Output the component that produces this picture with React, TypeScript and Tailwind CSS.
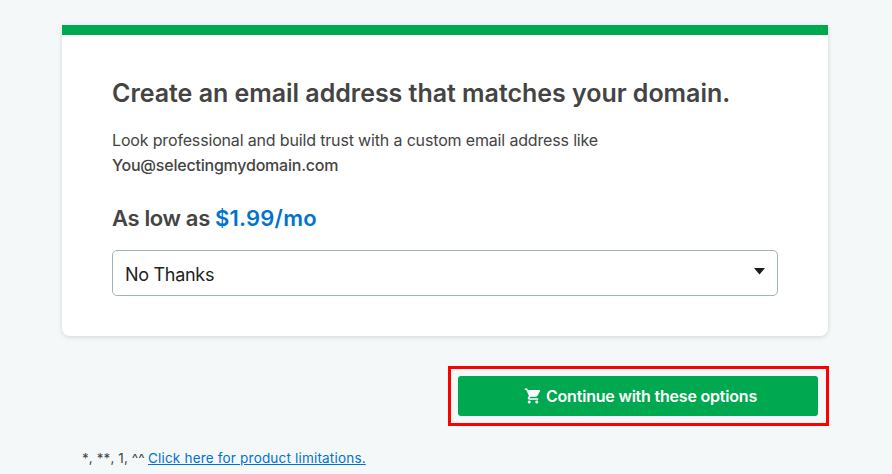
import React from "react";

function CartIcon() {
  return (
    <svg width="18" height="18" viewBox="0 0 24 24" fill="currentColor">
      <path d="M7 18c-1.1 0-2 .9-2 2s.9 2 2 2 2-.9 2-2-.9-2-2-2zM1 2v2h2l3.6 7.6-1.4 2.4C4.5 15.4 5.5 17 7 17h12v-2H7.4l1.1-2h7.5c.7 0 1.4-.4 1.7-1l3.6-6.5A1 1 0 0 0 20.4 4H5.2l-.9-2zM17 18c-1.1 0-2 .9-2 2s.9 2 2 2 2-.9 2-2-.9-2-2-2z" />
    </svg>
  );
}

export default function App() {
  return (
    <div className="h-[474px] w-[892px] overflow-hidden bg-[#f4f8f9] pt-[25px] pl-[62px] font-['Inter',sans-serif] text-[#444]">
      <main className="h-[311px] w-[766px] rounded-b-lg border-t-[10px] border-[#00a850] bg-white px-[50px] pt-[40px] shadow-[0_1px_5px_rgba(0,0,0,0.14)]">
        <h1 className="h-9 text-[25px] leading-9 font-semibold tracking-[-0.03px] whitespace-nowrap">Create an email address that matches your domain.</h1>
        <p className="mt-[17px] text-[16px] leading-[25px] tracking-[-0.16px] whitespace-nowrap">
          Look professional and build trust with a custom email address like<br />
          <span className="font-medium tracking-[-0.22px]">You@selectingmydomain.com</span>
        </p>
        <h2 className="mt-[22px] text-[22px] leading-[36px] font-semibold tracking-[-0.35px]">
          As low as <span className="tracking-[0.2px] text-[#0073d1]">$1.99/mo</span>
        </h2>
        <button className="mt-[14px] flex h-[46px] w-full items-center justify-between rounded-[5px] border border-[#9fb3b9] px-3 text-[18px] tracking-[-0.3px] text-[#222]">
          <span className="pt-0.5">No Thanks</span>
          <svg className="mb-1" width="11" height="7" viewBox="0 0 11 7"><path d="M0 0h11L5.5 6.5z" fill="#1c1c1c" /></svg>
        </button>
      </main>
      <div className="mt-[30px] ml-[386px] h-[60px] w-[381px] border-[3px] border-[#fe0000] p-[7px]">
        <button className="flex h-10 w-[360px] items-center justify-center gap-1 rounded-[3px] bg-[#00a850] pl-[5px] text-[16px] font-semibold tracking-[-0.2px] text-white">
          <CartIcon /><span>Continue with these options</span>
        </button>
      </div>
      <p className="mt-[22px] ml-5 flex text-[13.5px] leading-5 whitespace-nowrap">
        <span className="w-[66px] tracking-[0.1px] [font-kerning:none]">*, **, 1, ^^</span>
        <a className="tracking-[0.19px] text-[#0073d1] underline">Click here for product limitations.</a>
      </p>
    </div>
  );
}
